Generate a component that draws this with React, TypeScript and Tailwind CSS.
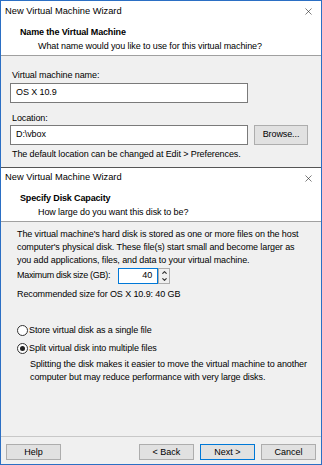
import { X, ChevronUp, ChevronDown } from 'lucide-react'

const font = { fontFamily: '"Liberation Sans", Arial, sans-serif' }

function TitleBar({ top }: { top?: boolean }) {
  return (
    <div className={`flex items-center justify-between bg-white pl-[4px] pr-[7px] h-[21px] ${top ? '' : 'border-t border-[#555]'}`}>
      <span className="text-[9.3px] text-black">New Virtual Machine Wizard</span>
      <X size={11} strokeWidth={1.3} className="text-[#222]" />
    </div>
  )
}

function Header({ title, sub }: { title: string; sub: string }) {
  return (
    <div className="bg-white border-b border-[#a0a0a0] pl-[19px] pt-[3px] h-[34px]">
      <div className="text-[9px] tracking-[-0.15px] font-bold leading-[14px] text-black">{title}</div>
      <div className="pl-[18px] text-[9px] tracking-[-0.1px] leading-[14px] text-black">{sub}</div>
    </div>
  )
}

function Btn({ label, primary }: { label: string; primary?: boolean }) {
  return (
    <button
      className={`w-[55px] h-[16px] text-[9px] leading-none bg-[#e1e1e1] border ${primary ? 'border-[#0078d7]' : 'border-[#adadad]'} text-black`}
    >
      {label}
    </button>
  )
}

function Radio({ checked, label }: { checked?: boolean; label: string }) {
  return (
    <div className="flex items-center gap-[1px] h-[13px]">
      <span className="w-[11px] h-[11px] rounded-full border border-[#333] bg-white flex items-center justify-center">
        {checked && <span className="w-[5px] h-[5px] rounded-full bg-[#222]" />}
      </span>
      <span>{label}</span>
    </div>
  )
}

export default function App() {
  return (
    <div style={font} className="w-[322px] h-[465px] border border-[#2b6fc4] bg-[#f0f0f0] flex flex-col overflow-hidden">
      {/* first wizard page */}
      <TitleBar top />
      <Header title="Name the Virtual Machine" sub="What name would you like to use for this virtual machine?" />
      <div className="h-[111px] pl-[9px] pr-[13px] pt-[12px] text-[9px] tracking-[-0.1px] text-black">
        <div className="pl-[2px] leading-[14px]">Virtual machine name:</div>
        <div className="mt-[1px] w-[238px] h-[20px] bg-white border border-[#7a7a7a] flex items-center pl-[5px]">OS X 10.9</div>
        <div className="pl-[2px] mt-[8px] leading-[14px]">Location:</div>
        <div className="flex gap-[6px]">
          <div className="w-[238px] h-[20px] bg-white border border-[#7a7a7a] flex items-center pl-[5px]">D:\vbox</div>
          <button className="w-[54px] h-[20px] bg-[#e1e1e1] border border-[#adadad] text-[9px]">Browse...</button>
        </div>
        <div className="pl-[2px] mt-[2px] leading-[14px]">The default location can be changed at Edit &gt; Preferences.</div>
      </div>

      {/* second wizard page */}
      <TitleBar />
      <Header title="Specify Disk Capacity" sub="How large do you want this disk to be?" />
      <div className="flex-1 pl-[16px] pr-[10px] pt-[6px] text-[9px] tracking-[-0.1px] text-black">
        <p className="leading-[13px]">
          The virtual machine's hard disk is stored as one or more files on the host computer's physical disk. These file(s) start small and become larger as you add applications, files, and data to your virtual machine.
        </p>
        <div className="flex items-center mt-[1px]">
          <span className="whitespace-nowrap tracking-[-0.3px] mr-[8px]">Maximum disk size (GB):</span>
          <div className="w-[40px] h-[16px] bg-white border border-[#0078d7] flex items-center justify-end pr-[5px]">40</div>
          <div className="w-[12px] h-[16px] border border-[#adadad] bg-[#f0f0f0] flex flex-col items-center justify-center">
            <ChevronUp size={7} strokeWidth={4} className="text-[#333]" />
            <ChevronDown size={7} strokeWidth={4} className="text-[#333]" />
          </div>
        </div>
        <div className="mt-[4px] leading-[13px]">Recommended size for OS X 10.9: 40 GB</div>
        <div className="mt-[23px] flex flex-col gap-[5px]">
          <Radio label="Store virtual disk as a single file" />
          <Radio checked label="Split virtual disk into multiple files" />
        </div>
        <p className="pl-[13px] mt-[3px] leading-[13px]">
          Splitting the disk makes it easier to move the virtual machine to another computer but may reduce performance with very large disks.
        </p>
      </div>
      <div className="border-t border-[#c8c8c8] h-[28px] flex items-start pt-[7px] px-[5px]">
        <Btn label="Help" />
        <div className="flex-1" />
        <div className="flex gap-[6px]">
          <Btn label="< Back" />
          <Btn label="Next >" primary />
          <Btn label="Cancel" />
        </div>
      </div>
    </div>
  )
}
